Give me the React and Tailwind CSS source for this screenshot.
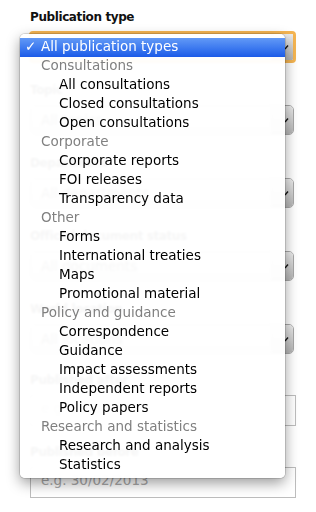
import React from "react";

const groups = [
  { label: "Consultations", items: ["All consultations", "Closed consultations", "Open consultations"] },
  { label: "Corporate", items: ["Corporate reports", "FOI releases", "Transparency data"] },
  { label: "Other", items: ["Forms", "International treaties", "Maps", "Promotional material"] },
  {
    label: "Policy and guidance",
    items: ["Correspondence", "Guidance", "Impact assessments", "Independent reports", "Policy papers"],
  },
  { label: "Research and statistics", items: ["Research and analysis", "Statistics"] },
];

function Label({ children, className = "" }) {
  return (
    <div className={"text-[12px] font-bold leading-[15px] tracking-[-0.4px] text-[#111] " + className}>{children}</div>
  );
}

function SelectInner({ text }) {
  return (
    <div className="flex h-full w-full">
      <div className="flex-1 flex items-center pl-[10px] text-[13.5px] text-[#333] bg-gradient-to-b from-[#fdfdfd] to-[#e2e2e2]">
        {text}
      </div>
      <div className="relative w-[22px] bg-gradient-to-b from-[#ececec] to-[#b5b5b5] border-l border-[#b0b0b0]">
        <svg className="absolute left-[12px] top-1/2 -translate-y-1/2" width="6" height="8" viewBox="0 0 6 8">
          <path d="M1 6 L4 2.5" stroke="#111" strokeWidth="1.3" fill="none" />
        </svg>
      </div>
    </div>
  );
}

function Select({ text }) {
  return (
    <div className="h-[30px] mr-[2px] rounded-[5px] border border-[#a8a8a8] overflow-hidden">
      <SelectInner text={text} />
    </div>
  );
}

function Row({ children, className = "" }) {
  return <div className={"h-[19px] leading-[17px] pb-[2px] whitespace-nowrap " + className}>{children}</div>;
}

export default function App() {
  return (
    <div className="relative w-[316px] h-[512px] overflow-hidden bg-white font-['DejaVu_Sans',sans-serif]">
      <div className="pt-[10px] pl-[30px] pr-[20px]">
        <Label className="mb-[6px]">Publication type</Label>
        <div className="h-[32px] -ml-px mb-[20px] rounded-[4px] border-[3px] border-[#f5b552] overflow-hidden">
          <SelectInner text="All publication types" />
        </div>

        <Label className="mb-[7px]">Topic</Label>
        <div className="mb-[21px]">
          <Select text="All topics" />
        </div>

        <Label className="mb-[7px]">Department</Label>
        <div className="mb-[21px]">
          <Select text="All departments" />
        </div>

        <Label className="mb-[7px]">Official document status</Label>
        <div className="mb-[21px]">
          <Select text="All documents" />
        </div>

        <Label className="mb-[7px]">World location</Label>
        <div className="mb-[19px]">
          <Select text="All locations" />
        </div>

        <Label className="mb-[7px]">Published after</Label>
        <div className="mb-[19px] h-[31px] border border-[#bdbdbd] flex items-center pl-[10px] pb-[4px] text-[13.5px] text-[#a9a9a9]">
          e.g. 30/02/2013
        </div>

        <Label className="mb-[7px]">Published before</Label>
        <div className="h-[31px] border border-[#bdbdbd] flex items-center pl-[10px] pb-[5px] text-[13.5px] text-[#a9a9a9]">
          e.g. 30/02/2013
        </div>
      </div>

      <div className="absolute left-[20px] top-[34px] w-[265px] h-[444px] rounded-[5px] pt-[4px] pb-[3px] bg-[rgba(255,255,255,0.96)] backdrop-blur-[1px] shadow-[0_5px_14px_rgba(0,0,0,0.4),0_0_0_1px_rgba(0,0,0,0.13)] text-[13.5px]">
        <Row className="pl-[5px] text-white bg-gradient-to-b from-[#6299f6] to-[#1b5ae8]">
          <span className="inline-block w-[16px]">✓</span>All publication types
        </Row>
        {groups.map((g) => (
          <React.Fragment key={g.label}>
            <Row className="pl-[21px] text-[#808080]">{g.label}</Row>
            {g.items.map((it) => (
              <Row key={it} className="pl-[39px] text-black">
                {it}
              </Row>
            ))}
          </React.Fragment>
        ))}
      </div>
    </div>
  );
}
